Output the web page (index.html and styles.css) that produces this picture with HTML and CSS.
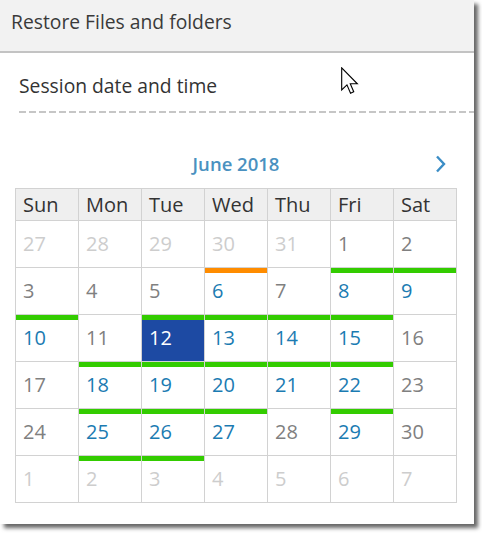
FILE: index.html
```html
<!DOCTYPE html>
<html>
<head>
<meta charset="utf-8">
<link rel="stylesheet" href="styles.css">
</head>
<body>
<div class="panel">
  <div class="header">Restore Files and folders</div>
  <div class="session">Session date and time</div>
  <div class="dash"></div>
  <div class="calendar">
    <div class="cal-head">
      <span class="month">June 2018</span>
      <svg class="next" width="12" height="18" viewBox="0 0 12 18"><polyline points="2,1.5 9,9 2,16.5" fill="none" stroke="#3b8dc6" stroke-width="2.4"/></svg>
    </div>
    <div class="grid">
      <div class="dow">Sun</div><div class="dow">Mon</div><div class="dow">Tue</div><div class="dow">Wed</div><div class="dow">Thu</div><div class="dow">Fri</div><div class="dow">Sat</div>

      <div class="day out">27</div><div class="day out">28</div><div class="day out">29</div><div class="day out">30</div><div class="day out">31</div><div class="day">1</div><div class="day">2</div>

      <div class="day">3</div><div class="day">4</div><div class="day">5</div><div class="day has warn">6</div><div class="day">7</div><div class="day has ok">8</div><div class="day has ok">9</div>

      <div class="day has ok">10</div><div class="day">11</div><div class="day sel ok">12</div><div class="day has ok">13</div><div class="day has ok">14</div><div class="day has ok">15</div><div class="day">16</div>

      <div class="day">17</div><div class="day has ok">18</div><div class="day has ok">19</div><div class="day has ok">20</div><div class="day has ok">21</div><div class="day has ok">22</div><div class="day">23</div>

      <div class="day">24</div><div class="day has ok">25</div><div class="day has ok">26</div><div class="day has ok">27</div><div class="day">28</div><div class="day has ok">29</div><div class="day">30</div>

      <div class="day out">1</div><div class="day out ok">2</div><div class="day out ok">3</div><div class="day out">4</div><div class="day out">5</div><div class="day out">6</div><div class="day out">7</div>
    </div>
  </div>
  <svg class="cursor" width="18" height="28" viewBox="0 0 13 20"><path d="M0.5,0.5 V16.5 L4.3,12.8 L6.9,18.8 L9.2,17.8 L6.7,12 H11.8 Z" fill="#fff" stroke="#000" stroke-width="0.8" stroke-linejoin="miter"/></svg>
</div>
</body>
</html>
```

FILE: styles.css
```css
html, body {
  margin: 0;
  padding: 0;
  background: #ffffff;
}

body {
  font-family: "Open Sans", "Liberation Sans", sans-serif;
  color: #333333;
  height: 533px;
}

.panel {
  position: relative;
  width: 474px;
  height: 524px;
  background: #ffffff;
  box-shadow: 4px 4px 4px rgba(0, 0, 0, 0.6);
}

.header {
  height: 51px;
  background: #f2f2f2;
  border-bottom: 2px solid #c3c3c3;
  padding-left: 11px;
  font-size: 19.3px;
  line-height: 44px;
  color: #3a3a3a;
}

.session {
  margin: 20px 0 0 19px;
  font-size: 19.3px;
  line-height: 26px;
  color: #333333;
}

.dash {
  margin: 12px 0 0 19px;
  height: 2px;
  background: repeating-linear-gradient(to right, #c6c6c6 0 7px, transparent 7px 10px);
}

.calendar {
  margin: 37px 0 0 15px;
  width: 442px;
}

.cal-head {
  height: 28px;
  display: flex;
  align-items: center;
  justify-content: center;
  position: relative;
}

.month {
  font-size: 18.5px;
  font-weight: 600;
  color: #4a91c0;
  line-height: 28px;
}

.next {
  position: absolute;
  right: 10px;
  top: 5px;
}

.grid {
  margin-top: 10px;
  display: grid;
  grid-template-columns: repeat(7, 63px);
  grid-template-rows: 32px repeat(6, 47px);
  border-left: 1px solid #d2d2d2;
  border-top: 1px solid #d2d2d2;
  width: 441px;
}

.dow, .day {
  border-right: 1px solid #d2d2d2;
  border-bottom: 1px solid #d2d2d2;
  display: flex;
  align-items: center;
  padding-left: 7px;
  font-size: 20px;
  line-height: 1;
}

.dow {
  background: #efefef;
  color: #333333;
}

.day {
  color: #808080;
}

.day.out {
  color: #cdcdcd;
}

.day.has {
  color: #1b7bb2;
}

.day.ok {
  background: linear-gradient(#33cc00 0 5px, transparent 5px);
}

.day.warn {
  background: linear-gradient(#ff8c00 0 5px, transparent 5px);
}

.day.sel {
  color: #ffffff;
  background: linear-gradient(#33cc00 0 5px, #1d4aa3 5px);
}

.cursor {
  position: absolute;
  left: 341px;
  top: 67px;
}
```
